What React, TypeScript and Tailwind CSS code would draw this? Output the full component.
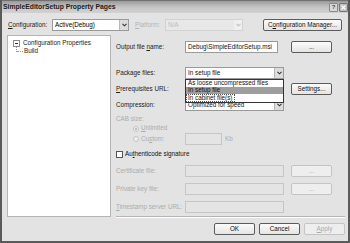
import React from "react";

const Arrow = ({ disabled = false }: { disabled?: boolean }) => (
  <div
    className={`w-[9px] h-full flex items-center justify-center border-l ${
      disabled ? "border-[#e8e8e8] bg-[#efefef]" : "border-[#b8b8b8] bg-[#dcdcdc]"
    }`}
  >
    <svg width="5" height="4" viewBox="0 0 5 4">
      <path d="M0.5 0.8 L2.5 2.8 L4.5 0.8" fill="none" stroke={disabled ? "#bdbdbd" : "#333"} strokeWidth="1.1" />
    </svg>
  </div>
);

const Btn = ({ children, w = "w-[41px]", disabled = false }: { children: React.ReactNode; w?: string; disabled?: boolean }) => (
  <div
    className={`${w} h-[12px] rounded-[2px] border flex items-center justify-center ${
      disabled
        ? "border-[#c4c4c4] text-[#a9a9a9] bg-[#eeeeee]"
        : "border-[#5c5c5c] text-[#111] bg-gradient-to-b from-[#fbfbfb] to-[#e4e4e4]"
    }`}
  >
    {children}
  </div>
);

const Label = ({ children, disabled = false }: { children: React.ReactNode; disabled?: boolean }) => (
  <div className={`w-[69px] shrink-0 ${disabled ? "text-[#ababab]" : "text-[#222]"}`}>{children}</div>
);

const DisabledInput = () => <div className="w-[99px] h-[12px] border border-[#c6c6c6] bg-[#e4e4e4]" />;

export default function App() {
  return (
    <div
      className="w-[350px] h-[243px] flex flex-col bg-[#e3e3e3] border-x-2 border-b-2 border-[#5a5a5a] text-[6.3px] leading-none overflow-hidden"
      style={{ fontFamily: "'Liberation Sans', Arial, sans-serif" }}
    >
      {/* Title bar */}
      <div className="h-[13px] shrink-0 flex items-center justify-between pl-[1px] pr-[0px] bg-gradient-to-b from-[#9a9a9a] via-[#c4c4c4] to-[#d2d2d2] border-t border-[#707070]">
        <div className="font-bold text-[6.8px] text-[#1a1a1a]">SimpleEditorSetup Property Pages</div>
        <div className="flex gap-[1px] items-center">
          <div className="w-[9px] h-[9px] rounded-[1px] border border-[#888] bg-[#d8d8d8] flex items-center justify-center text-[6px] font-bold text-[#444]">?</div>
          <div className="w-[9px] h-[9px] rounded-[1px] border border-[#777] bg-[#bdbdbd] flex items-center justify-center">
            <svg width="5" height="5" viewBox="0 0 5 5">
              <path d="M0.5 0.5 L4.5 4.5 M4.5 0.5 L0.5 4.5" stroke="#fff" strokeWidth="1.2" />
            </svg>
          </div>
        </div>
      </div>

      {/* Config row */}
      <div className="flex items-center h-[12px] mt-[6px] pl-[6px]">
        <div className="w-[44px] text-[#222]">
          <span className="underline">C</span>onfiguration:
        </div>
        <div className="w-[77px] h-[12px] border border-[#9a9a9a] bg-white flex items-stretch">
          <div className="flex-1 pl-[2px] flex items-center">Active(Debug)</div>
          <Arrow />
        </div>
        <div className="ml-[6px] w-[30px] text-[#b5b5b5]">
          <span className="underline">P</span>latform:
        </div>
        <div className="w-[78px] h-[12px] border border-[#d2d2d2] bg-[#e8e8e8] flex items-stretch">
          <div className="flex-1 pl-[2px] flex items-center text-[#bcbcbc]">N/A</div>
          <Arrow disabled />
        </div>
        <div className="ml-[20px]">
          <Btn w="w-[79px]">
            C<span className="underline">o</span>nfiguration Manager...
          </Btn>
        </div>
      </div>

      {/* Main */}
      <div className="flex flex-1 mt-[4px] pl-[5px]">
        {/* Tree */}
        <div className="w-[104px] h-[182px] bg-white border border-[#b5b5b5] relative pt-[3px] pl-[5px]">
          <div className="flex items-center h-[8px]">
            <div className="w-[7px] h-[7px] border border-[#8a8a8a] flex items-center justify-center">
              <div className="w-[3px] h-[1px] bg-[#333]" />
            </div>
            <div className="ml-[3px] text-[#222]">Configuration Properties</div>
          </div>
          <div className="flex items-center h-[9px] pl-[3px]">
            <div className="w-[1px] h-[5px] border-l border-dotted border-[#999] self-start" />
            <div className="w-[6px] border-t border-dotted border-[#999]" />
            <div className="text-[#222] px-[1px]">Build</div>
          </div>
        </div>

        {/* Right panel */}
        <div className="flex flex-col flex-1 pl-[5px]">
          <div className="flex items-center h-[12px] mt-[6px]">
            <Label>
              Output file <span className="underline">n</span>ame:
            </Label>
            <div className="w-[93px] h-[12px] border border-[#9a9a9a] bg-white pl-[2px] flex items-center text-[#111]">
              Debug\SimpleEditorSetup.msi
            </div>
            <div className="ml-[13px]">
              <Btn>...</Btn>
            </div>
          </div>

          <div className="flex items-center h-[12px] mt-[14px]">
            <Label>Package files:</Label>
            <div className="relative w-[99px] h-[12px] border border-[#9a9a9a] bg-white flex items-stretch">
              <div className="flex-1 pl-[2px] flex items-center text-[#111]">In setup file</div>
              <Arrow />
              <div className="absolute left-[-1px] top-[11px] w-[99px] h-[24px] border border-[#333] bg-white z-10 flex flex-col overflow-hidden">
                <div className="h-[7px] shrink-0 pl-[2px] flex items-center text-[#111]">As loose uncompressed files</div>
                <div className="h-[7px] shrink-0 pl-[2px] flex items-center text-[#111] bg-[#9e9e9e]">In setup file</div>
                <div className="h-[8px] shrink-0 flex">
                  <div className="h-[8px] outline outline-1 outline-dotted outline-[#555] -outline-offset-1 pl-[2px] pr-[3px] flex items-center text-[#111]">
                    In cabinet file(s)
                  </div>
                </div>
              </div>
            </div>
          </div>

          <div className="flex items-center h-[12px] mt-[4px]">
            <Label>
              <span className="underline">P</span>rerequisites URL:
            </Label>
            <div className="w-[99px] h-[12px] border border-[#9a9a9a] bg-white" />
            <div className="ml-[7px]">
              <Btn>Settings...</Btn>
            </div>
          </div>

          <div className="flex items-center h-[12px] mt-[4px]">
            <Label>Compression:</Label>
            <div className="w-[99px] h-[12px] border border-[#9a9a9a] bg-white flex items-stretch">
              <div className="flex-1 pl-[2px] flex items-center text-[#111]">Optimized for speed</div>
              <Arrow />
            </div>
          </div>

          <div className="flex items-center h-[10px] mt-[3px]">
            <Label disabled>CAB size:</Label>
          </div>

          <div className="flex items-center h-[9px] pl-[17px]">
            <div className="w-[6px] h-[6px] rounded-full border border-[#c4c4c4] bg-[#efefef] flex items-center justify-center">
              <div className="w-[2px] h-[2px] rounded-full bg-[#b0b0b0]" />
            </div>
            <div className="ml-[2px] text-[#ababab]">
              <span className="underline">U</span>nlimited
            </div>
          </div>

          <div className="flex items-center h-[12px]">
            <div className="w-[69px] shrink-0 flex items-center pl-[17px]">
              <div className="w-[6px] h-[6px] rounded-full border border-[#c4c4c4] bg-[#efefef]" />
              <div className="ml-[2px] text-[#ababab]">
                Cu<span className="underline">s</span>tom:
              </div>
            </div>
            <div className="w-[37px] h-[12px] border border-[#c6c6c6] bg-[#e4e4e4]" />
            <div className="ml-[3px] text-[#ababab]">Kb</div>
          </div>

          <div className="flex items-center h-[10px] mt-[4px]">
            <div className="w-[7px] h-[7px] border border-[#555] bg-white" />
            <div className="ml-[2px] text-[#111]">
              Au<span className="underline">t</span>henticode signature
            </div>
          </div>

          <div className="flex items-center h-[12px] mt-[6px]">
            <Label disabled>Certificate file:</Label>
            <DisabledInput />
            <div className="ml-[7px]">
              <Btn disabled>...</Btn>
            </div>
          </div>

          <div className="flex items-center h-[12px] mt-[6px]">
            <Label disabled>Private key file:</Label>
            <DisabledInput />
            <div className="ml-[7px]">
              <Btn disabled>...</Btn>
            </div>
          </div>

          <div className="flex items-center h-[12px] mt-[6px]">
            <Label disabled>
              <span className="underline">T</span>imestamp server URL:
            </Label>
            <DisabledInput />
          </div>

          <div className="h-[2px] mt-[3px] mr-[3px] border-t border-[#b4b4b4] border-b border-b-white" />

          <div className="flex items-center justify-end h-[12px] mt-[5px] mr-[3px] gap-[4px]">
            <Btn>OK</Btn>
            <Btn>Cancel</Btn>
            <Btn disabled>
              <span className="underline">A</span>pply
            </Btn>
          </div>
        </div>
      </div>
    </div>
  );
}
